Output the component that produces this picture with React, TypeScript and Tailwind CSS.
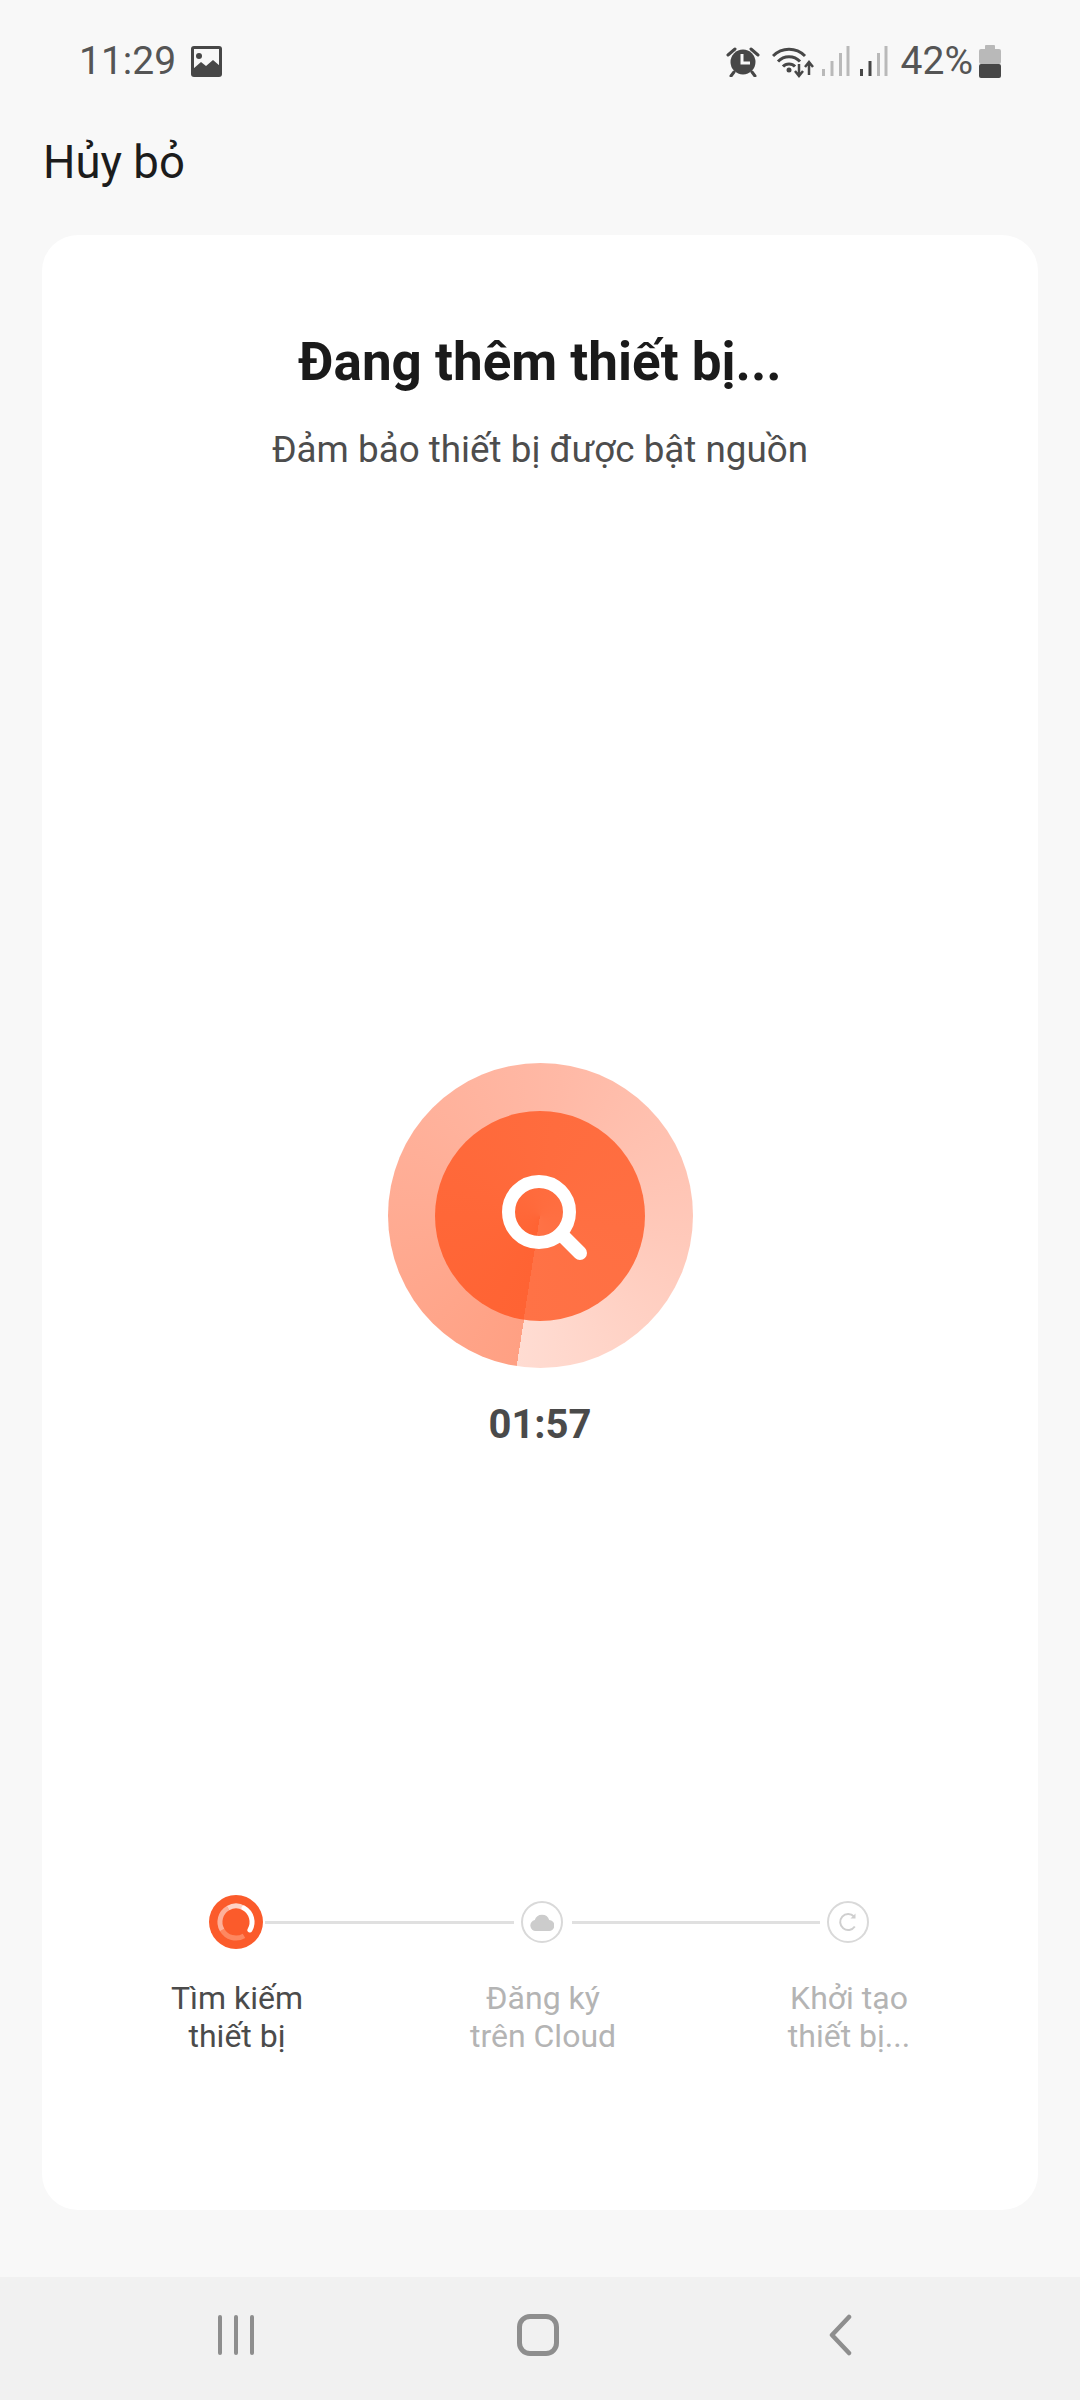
import React from "react";

function ImageIcon() {
  return (
    <svg width="31" height="31" viewBox="0 0 31 31" className="ml-[15px]">
      <rect x="0" y="0" width="31" height="31" rx="3" fill="#474747" />
      <rect x="3" y="3" width="25" height="22" fill="#f8f8f8" />
      <circle cx="8" cy="10" r="3" fill="#474747" />
      <path d="M2 23l8-7 5 4 7-6 7 6v10H2z" fill="#474747" />
    </svg>
  );
}

function AlarmIcon() {
  return (
    <svg width="34" height="31" viewBox="0 0 34 31">
      <circle cx="17" cy="16" r="12.5" fill="#474747" />
      <path d="M16 8v9h8" fill="none" stroke="#f8f8f8" strokeWidth="3" />
      <path d="M2 9l7-6M32 9l-7-6" stroke="#474747" strokeWidth="3" strokeLinecap="round" />
      <path d="M8 26l-3 4M26 26l3 4" stroke="#474747" strokeWidth="3" strokeLinecap="round" />
    </svg>
  );
}

function WifiIcon() {
  return (
    <svg width="42" height="33" viewBox="0 0 42 33" className="ml-[12px]">
      <path d="M1 11C10 2 24 2 33 11" fill="none" stroke="#474747" strokeWidth="3" />
      <path d="M6 16.5C12 10 22 10 28 16.5" fill="none" stroke="#474747" strokeWidth="3" />
      <path d="M11 21.5C14 18 20 18 23 21.5" fill="none" stroke="#474747" strokeWidth="3" />
      <circle cx="17" cy="25" r="2.5" fill="#474747" />
      <path d="M27 19v11M23 26l4 5 4-5" fill="none" stroke="#474747" strokeWidth="2.5" />
      <path d="M37 30V18M33 22l4-5 4 5" fill="none" stroke="#474747" strokeWidth="2.5" />
    </svg>
  );
}

function SignalIcon({ active, className }: { active: number; className?: string }) {
  const bars = [
    { x: 0, y: 23, h: 7 },
    { x: 8.5, y: 15, h: 15 },
    { x: 17, y: 7, h: 23 },
    { x: 24.5, y: 0, h: 30 },
  ];
  return (
    <svg width="28" height="30" viewBox="0 0 28 30" className={className}>
      {bars.map((b, i) => (
        <rect key={i} x={b.x} y={b.y} width="3" height={b.h} fill={i < active ? "#474747" : "#b9b9b9"} />
      ))}
    </svg>
  );
}

function BatteryIcon() {
  return (
    <svg width="22" height="33" viewBox="0 0 22 33" className="ml-[6px]">
      <rect x="6" y="0" width="10" height="5" rx="1" fill="#b9b9b9" />
      <rect x="0" y="4" width="22" height="15" rx="2" fill="#b9b9b9" />
      <rect x="0" y="19" width="22" height="14" rx="2" fill="#474747" />
    </svg>
  );
}

// ring fades out towards the bottom and breaks at about 4 o'clock
function SearchingDot() {
  return (
    <svg width="54" height="54" viewBox="0 0 54 54">
      <circle cx="27" cy="27" r="27" fill="#fb5b2b" />
      <g fill="none" strokeWidth="5">
        <path d="M35 40.900A16 16 0 0 1 13.100 35" stroke="#fd8760" />
        <path d="M13.100 35A16 16 0 0 1 19 13.100" stroke="#fdb09a" />
        <path d="M19 13.100A16 16 0 0 1 35 13.100" stroke="#fed3c7" />
        <path d="M35 13.100A16 16 0 0 1 40.900 35" stroke="#ffffff" strokeLinecap="round" />
      </g>
    </svg>
  );
}

function CloudIcon() {
  return (
    <svg width="24" height="18" viewBox="0 0 24 18">
      <path d="M6 18a5.5 5.5 0 0 1-1.2-10.9A7.5 7.5 0 0 1 19.2 7 5.5 5.5 0 0 1 18.500 18z" fill="#cccccc" />
    </svg>
  );
}

function RestartIcon() {
  return (
    <svg width="20" height="20" viewBox="0 0 20 20">
      <path d="M16.800 14.500A8 8 0 1 1 16 4.500" fill="none" stroke="#cfcfcf" strokeWidth="2" />
      <path d="M17.500 1.500v5h-5" fill="#cfcfcf" />
    </svg>
  );
}

function Step({ label1, label2, active }: { label1: string; label2: string; active?: boolean }) {
  return (
    <div
      className={
        "text-center text-[32px] leading-[38px] " + (active ? "text-[#4b4b4b]" : "text-[#b4b4b4]")
      }
    >
      <p>{label1}</p>
      <p>{label2}</p>
    </div>
  );
}

export default function App() {
  return (
    <div className="flex h-[2400px] w-[1080px] flex-col overflow-hidden bg-[#f8f8f8] font-['Roboto',sans-serif]">
      {/* status bar */}
      <div className="flex h-[137px] shrink-0 items-start justify-between pl-[79px] pr-[79px] pt-[44px]">
        <div className="flex items-center">
          <span className="text-[39px] font-normal leading-[34px] text-[#555555]">11:29</span>
          <ImageIcon />
        </div>
        <div className="flex items-center">
          <AlarmIcon />
          <WifiIcon />
          <SignalIcon active={0} className="ml-[8px]" />
          <SignalIcon active={2} className="ml-[10px]" />
          <span className="ml-[13px] text-[39px] font-normal leading-[34px] text-[#555555]">42%</span>
          <BatteryIcon />
        </div>
      </div>

      <div className="pl-[43px] text-[45.5px] leading-[52px] text-[#1c1c1c]">Hủy bỏ</div>

      {/* card */}
      <div className="ml-[42px] mt-[46px] flex h-[1975px] w-[996px] flex-col items-center rounded-[36px] bg-white pt-[97px]">
        <h1 className="text-[53px] font-bold leading-[60px] text-[#1a1a1a]">Đang thêm thiết bị...</h1>
        <p className="mt-[37px] text-[36.8px] leading-[42px] text-[#4d4d4d]">Đảm bảo thiết bị được bật nguồn</p>

        <div className="mt-[592px] flex h-[305px] w-[305px] items-center justify-center rounded-full bg-[conic-gradient(from_189deg,#ffa083,#ffb9a6_50%,#ffc9ba_75%,#ffdcd2)]">
          <div className="flex h-[210px] w-[210px] items-center justify-center rounded-full bg-[conic-gradient(from_189deg,#ff6333,#ff6c3e_50%,#ff7246)]">
            <svg width="88" height="88" viewBox="0 0 88 88" className="ml-[12px] mt-[6px]">
              <circle cx="37" cy="37" r="30.500" fill="none" stroke="#fff" strokeWidth="13" />
              <path d="M59 59l19 19" stroke="#fff" strokeWidth="14" strokeLinecap="round" />
            </svg>
          </div>
        </div>

        <p className="mt-[34px] text-[40px] font-bold leading-[46px] text-[#4a4a4a]">01:57</p>

        <div className="mt-[447px] flex w-[660px] -translate-x-[1px] items-center">
          <SearchingDot />
          <div className="ml-[2px] h-[3px] flex-1 bg-[#e0e0e0]" />
          <div className="ml-[7px] mr-[9px] flex h-[42px] w-[42px] items-center justify-center rounded-full border-2 border-[#d9d9d9]">
            <CloudIcon />
          </div>
          <div className="h-[3px] flex-1 bg-[#e0e0e0]" />
          <div className="ml-[7px] flex h-[42px] w-[42px] items-center justify-center rounded-full border-2 border-[#d9d9d9]">
            <RestartIcon />
          </div>
        </div>

        <div className="ml-[6px] mt-[30px] grid w-[918px] grid-cols-3">
          <Step label1="Tìm kiếm" label2="thiết bị" active />
          <Step label1="Đăng ký" label2="trên Cloud" />
          <Step label1="Khởi tạo" label2="thiết bị..." />
        </div>
      </div>

      {/* nav bar */}
      <div className="mt-auto flex h-[123px] items-center bg-[#f1f1f1] pb-[8px]">
        <div className="ml-[218px] flex gap-[12px]">
          <div className="h-[40px] w-[4px] rounded-full bg-[#8e8e8e]" />
          <div className="h-[40px] w-[4px] rounded-full bg-[#8e8e8e]" />
          <div className="h-[40px] w-[4px] rounded-full bg-[#8e8e8e]" />
        </div>
        <div className="ml-[263px] h-[42px] w-[42px] rounded-[13px] border-[5px] border-[#8e8e8e]" />
        <svg width="24" height="42" viewBox="0 0 24 42" className="ml-[269px]">
          <path d="M21 3L4 21l17 18" fill="none" stroke="#8e8e8e" strokeWidth="4.500" strokeLinecap="round" strokeLinejoin="round" />
        </svg>
      </div>
    </div>
  );
}
